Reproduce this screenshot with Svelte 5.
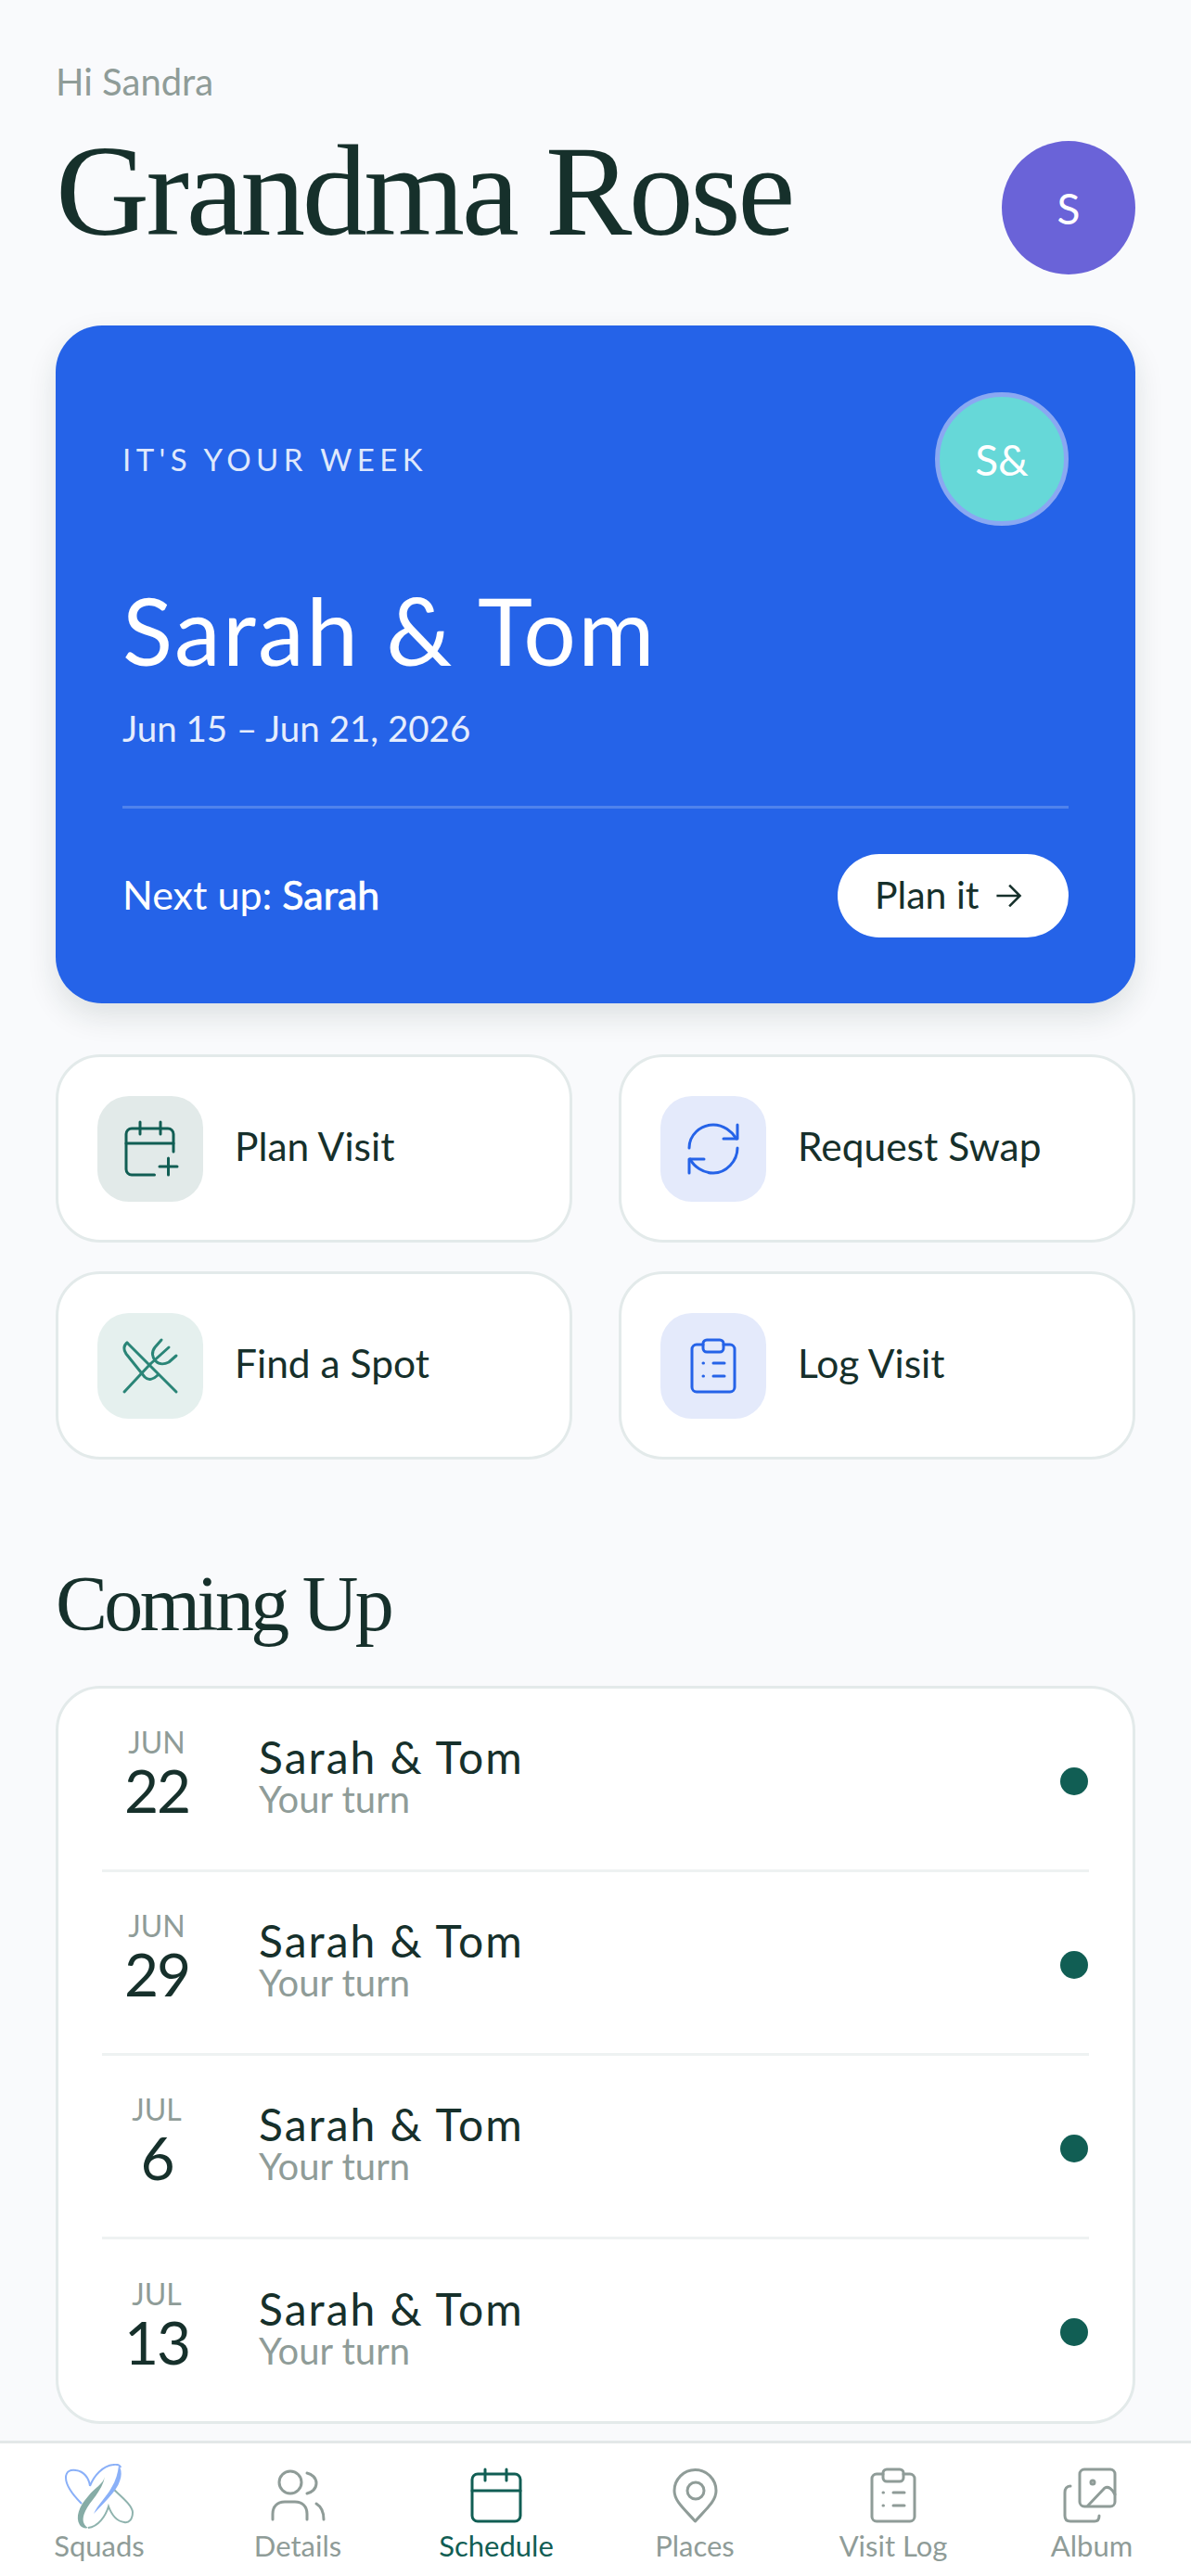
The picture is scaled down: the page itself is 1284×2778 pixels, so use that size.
<script>
	const actions = [
		{ label: 'Plan Visit', tone: 'green', icon: 'calplus' },
		{ label: 'Request Swap', tone: 'blue', icon: 'swap' },
		{ label: 'Find a Spot', tone: 'teal', icon: 'food' },
		{ label: 'Log Visit', tone: 'blue', icon: 'clip' }
	];
	const visits = [
		{ month: 'JUN', day: '22' },
		{ month: 'JUN', day: '29' },
		{ month: 'JUL', day: '6' },
		{ month: 'JUL', day: '13' }
	];
	const tabs = [
		{ label: 'Squads', icon: 'logo' },
		{ label: 'Details', icon: 'people' },
		{ label: 'Schedule', icon: 'cal', active: true },
		{ label: 'Places', icon: 'pin' },
		{ label: 'Visit Log', icon: 'clip' },
		{ label: 'Album', icon: 'album' }
	];
</script>

{#snippet glyph(name)}
	{#if name === 'calplus'}
		<svg viewBox="0 0 60 60" class="ico">
			<path d="M55 33V14a6 6 0 0 0-6-6H10a6 6 0 0 0-6 6v38a6 6 0 0 0 6 6h24.5" />
			<path d="M4 24h51M19 1v13M41 1v13M49.5 40v18M40 49h19" />
		</svg>
	{:else if name === 'swap'}
		<svg viewBox="0 0 60 60" class="ico">
			<path d="M4 29C4 15 16 4 30 4c11 0 20 7 25 15" />
			<path d="M56 4v15H41" />
			<path d="M56 29c0 14-12 27-26 27-11 0-21-7-25-15" />
			<path d="M4 56V41h16" />
		</svg>
	{:else if name === 'food'}
		<svg viewBox="0 0 60 60" class="ico">
			<path d="M5 5l53 53" />
			<path d="M5 5C1 8 1 13 4 17l20 25c4 4 9 3 14-2" />
			<path d="M2 58l28-30" />
			<path d="M30 28 50 10M42 2l-7 8c-4 5-3 11 1 15 4 4 10 3 14 1l8-7" />
		</svg>
	{:else if name === 'clip'}
		<svg viewBox="0 0 60 60" class="ico">
			<path d="M19 7h-7a5 5 0 0 0-5 5v41a5 5 0 0 0 5 5h36a5 5 0 0 0 5-5V12a5 5 0 0 0-5-5h-7" />
			<rect x="19" y="2" width="22" height="13" rx="4" />
			<path d="M19 27h.5M19 41h.5M30 27h12M30 41h12" />
		</svg>
	{:else if name === 'cal'}
		<svg viewBox="0 0 60 60" class="ico">
			<rect x="4" y="7" width="52" height="51" rx="6" />
			<path d="M4 25h52M18 2v12M41 2v12" />
		</svg>
	{:else if name === 'people'}
		<svg viewBox="0 0 60 60" class="ico">
			<circle cx="22" cy="16" r="12" />
			<path d="M3 56v-6c0-8 5-13 13-13h11c8 0 13 5 13 13v6" />
			<path d="M40 6c5 1 10 5 10 11s-5 10-10 11" />
			<path d="M50 39c5 3 8 9 8 17" />
		</svg>
	{:else if name === 'pin'}
		<svg viewBox="0 0 60 60" class="ico">
			<path d="M30.5 58C18 44 8 36 8 25a22.5 22.5 0 0 1 45 0c0 11-10 19-22.5 33Z" />
			<circle cx="31" cy="25" r="9" />
		</svg>
	{:else if name === 'album'}
		<svg viewBox="0 0 60 60" class="ico">
			<rect x="17" y="2" width="38" height="40" rx="5" />
			<circle cx="31" cy="16" r="2" />
			<path d="M26 41 44 22c4-2 8 1 11 7" />
			<path d="M7 20c-4 0-6 3-6 7v25c0 4 2 6 6 6h26c3 0 5-2 5-6" />
		</svg>
	{:else if name === 'logo'}
		<svg viewBox="0 0 74 70" class="logo">
			<path class="thin-blue" d="M18 43C8 33 1 24 1 15 1 8 6 6 12 7c8 1 14 8 15 17C31 13 41 2 52 1c5-1 8 1 8 3" />
			<path class="thin-teal" d="M51 26c9 9 21 18 22 26 0 8-4 12-9 11-9-1-14-9-17-17-3 10-11 22-22 23" />
			<path class="fill-teal" d="M43 14c-2 8-11 12-18 21C15 46 11 58 16 66c2 3 6 4 9 3-6-3-7-10-3-18 5-11 18-21 21-37Z" />
			<path class="fill-blue" d="M58 2c5 6 3 18-6 29-6 8-14 15-21 23 4-10 13-17 19-28 5-8 7-16 8-24Z" />
		</svg>
	{/if}
{/snippet}

<div class="screen">
	<main>
		<header>
			<div>
				<p class="hello">Hi Sandra</p>
				<h1>Grandma Rose</h1>
			</div>
			<div class="me">S</div>
		</header>

		<section class="week">
			<div class="week-top">
				<span class="eyebrow">IT'S YOUR WEEK</span>
				<div class="pair">S&amp;</div>
			</div>
			<h2>Sarah &amp; Tom</h2>
			<p class="dates">Jun 15 – Jun 21, 2026</p>
			<div class="week-foot">
				<span class="next">Next up: <b>Sarah</b></span>
				<span class="plan">Plan it
					<svg viewBox="0 0 28 28"><path d="M3 14h22M15 4l10 10-10 10" /></svg>
				</span>
			</div>
		</section>

		<section class="actions">
			{#each actions as a}
				<div class="action">
					<div class="tile {a.tone}">{@render glyph(a.icon)}</div>
					<span>{a.label}</span>
				</div>
			{/each}
		</section>

		<h3>Coming Up</h3>
		<section class="list">
			{#each visits as v}
				<div class="row">
					<div class="date">
						<span class="mon">{v.month}</span>
						<span class="day">{v.day}</span>
					</div>
					<div class="who">
						<span class="name">Sarah &amp; Tom</span>
						<span class="sub">Your turn</span>
					</div>
					<i class="dot"></i>
				</div>
			{/each}
		</section>
	</main>

	<nav>
		{#each tabs as t}
			<div class="tab" class:active={t.active}>
				{@render glyph(t.icon)}
				<span>{t.label}</span>
			</div>
		{/each}
	</nav>
</div>

<style>
	:global(body) {
		background: #f9fafc;
	}
	.screen {
		width: 1284px;
		height: 2778px;
		display: flex;
		flex-direction: column;
		justify-content: space-between;
		font-family: 'Lato', sans-serif;
		color: #16302b;
		overflow: hidden;
	}
	main {
		padding: 68px 60px 0;
	}
	header {
		display: flex;
		justify-content: space-between;
		align-items: flex-start;
		height: 228px;
	}
	.hello {
		margin: 0;
		font-size: 40px;
		line-height: 40px;
		color: #8f9c98;
	}
	h1 {
		margin: 30px 0 0;
		font-family: 'Liberation Serif', serif;
		font-weight: 400;
		font-size: 140px;
		line-height: 136px;
		letter-spacing: -3.5px;
		color: #16302b;
	}
	.me {
		align-self: flex-end;
		width: 144px;
		height: 144px;
		border-radius: 50%;
		background: #6a63d8;
		color: #fff;
		font-size: 46px;
		display: flex;
		align-items: center;
		justify-content: center;
	}
	.week {
		margin-top: 55px;
		height: 731px;
		box-sizing: border-box;
		padding: 72px;
		border-radius: 50px;
		background: #2563e8;
		color: #fff;
		box-shadow: 0 14px 32px rgba(22, 48, 43, 0.12);
	}
	.week-top {
		display: flex;
		justify-content: space-between;
		align-items: center;
		height: 144px;
	}
	.eyebrow {
		font-size: 33px;
		letter-spacing: 5.4px;
		color: #dfe8fc;
	}
	.pair {
		width: 144px;
		height: 144px;
		box-sizing: border-box;
		border-radius: 50%;
		border: 5px solid #8aa8f2;
		background: #66d8d8;
		font-size: 46px;
		display: flex;
		align-items: center;
		justify-content: center;
	}
	h2 {
		margin: 52px 0 0;
		font-weight: 400;
		font-size: 100px;
		line-height: 120px;
		letter-spacing: 2.4px;
	}
	.dates {
		margin: 22px 0 0;
		font-size: 38.5px;
		line-height: 48px;
		color: #e6edfd;
	}
	.week-foot {
		margin-top: 60px;
		padding-top: 49px;
		border-top: 3px solid rgba(255, 255, 255, 0.2);
		display: flex;
		justify-content: space-between;
		align-items: center;
	}
	.next {
		font-size: 43px;
		margin-bottom: 4px;
	}
	.next b {
		font-weight: 400;
		-webkit-text-stroke: 0.7px #fff;
	}
	.plan {
		height: 90px;
		width: 249px;
		box-sizing: border-box;
		padding: 0 0 4px 40px;
		border-radius: 45px;
		background: #fff;
		color: #16302b;
		font-size: 41px;
		display: flex;
		align-items: center;
		gap: 16px;
	}
	.plan svg {
		width: 32px;
		height: 32px;
		margin-top: 4px;
		fill: none;
		stroke: #16302b;
		stroke-width: 2.2;
	}
	.actions {
		margin-top: 55px;
		display: grid;
		grid-template-columns: 557px 557px;
		column-gap: 50px;
		row-gap: 31px;
	}
	.action {
		height: 203px;
		box-sizing: border-box;
		padding: 0 42px;
		border: 3px solid #e3eaea;
		border-radius: 48px;
		background: #fff;
		display: flex;
		align-items: center;
		gap: 34px;
		font-size: 42.5px;
	}
	.action span {
		margin-bottom: 6px;
	}
	.tile {
		width: 114px;
		height: 114px;
		border-radius: 34px;
		display: flex;
		align-items: center;
		justify-content: center;
	}
	.tile .ico {
		width: 60px;
		height: 60px;
	}
	.tile.green {
		background: #e2eae9;
		color: #115e54;
	}
	.tile.teal {
		background: #e5f0ee;
		color: #2a8577;
	}
	.tile.blue {
		background: #e4eafb;
		color: #2563e8;
	}
	.ico {
		fill: none;
		stroke: currentColor;
		stroke-width: 3;
		stroke-linecap: round;
		stroke-linejoin: round;
		overflow: visible;
	}
	h3 {
		margin: 105px 0 0;
		font-family: 'Liberation Serif', serif;
		font-weight: 400;
		font-size: 84px;
		line-height: 102px;
		letter-spacing: -3.7px;
	}
	.list {
		margin-top: 37px;
		border: 3px solid #e3eaea;
		border-radius: 48px;
		background: #fff;
		padding: 0 47px;
	}
	.row {
		height: 198px;
		box-sizing: border-box;
		display: flex;
		align-items: center;
		border-bottom: 3px solid #eef2f2;
	}
	.row:last-child {
		height: 196px;
		border-bottom: 0;
	}
	.date {
		width: 118px;
		margin-right: 51px;
		margin-bottom: 14px;
		display: flex;
		flex-direction: column;
		align-items: center;
	}
	.mon {
		font-size: 32px;
		line-height: 39px;
		color: #8f9c98;
	}
	.day {
		font-size: 64px;
		line-height: 66px;
		letter-spacing: -2px;
	}
	.who {
		flex: 1;
		display: flex;
		flex-direction: column;
		margin-bottom: 11px;
	}
	.name {
		font-size: 48px;
		line-height: 54px;
		letter-spacing: 2px;
	}
	.sub {
		font-size: 40px;
		line-height: 36px;
		color: #8f9c98;
	}
	.dot {
		width: 30px;
		height: 30px;
		margin: 4px 1px 0 0;
		border-radius: 50%;
		background: #115e54;
	}
	nav {
		height: 146px;
		box-sizing: border-box;
		border-top: 3px solid #e3e8e8;
		background: #fff;
		display: grid;
		grid-template-columns: repeat(6, 1fr);
		color: #8f9c98;
	}
	.tab {
		display: flex;
		flex-direction: column;
		align-items: center;
		padding-top: 26px;
		font-size: 31px;
		gap: 7px;
		line-height: 34px;
	}
	.tab .ico {
		width: 60px;
		height: 60px;
	}
	.tab .logo {
		width: 74px;
		height: 70px;
		margin: -4px 0 -6px;
	}
	.tab.active {
		color: #115e54;
	}
	.logo {
		fill: none;
	}
	.thin-blue {
		stroke: #8ab0f8;
		stroke-width: 2;
	}
	.thin-teal {
		stroke: #8fb3ae;
		stroke-width: 2;
	}
	.fill-blue {
		fill: #8ab0f8;
	}
	.fill-teal {
		fill: #86aca6;
	}
</style>
